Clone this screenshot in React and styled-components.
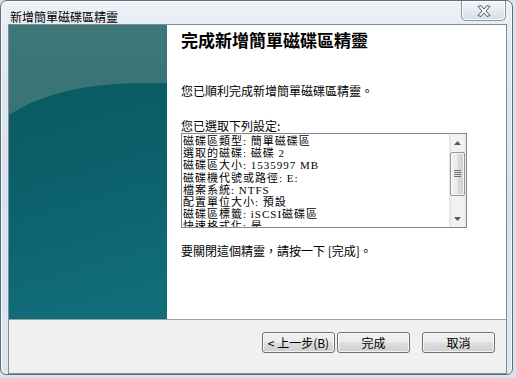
import React from "react";
import styled, { createGlobalStyle } from "styled-components";

const GlobalStyle = createGlobalStyle`
  html, body {
    margin: 0;
    padding: 0;
    background: #d9e2ea;
  }
  body {
    font-family: "Noto Sans CJK TC", "Noto Sans", sans-serif;
    font-size: 12px;
    color: #000;
  }
`;

const Frame = styled.div`
  box-sizing: border-box;
  width: 513px;
  height: 375px;
  padding: 0 5px 6px 7px;
  border: 1px solid #5f6e7c;
  border-radius: 7px 7px 6px 6px;
  background: linear-gradient(180deg, #eef2f6 0%, #e1e9f0 12%, #d6e2ec 55%, #dde7f0 100%);
  box-shadow: inset 0 0 0 1px rgba(255, 255, 255, 0.7);
  display: flex;
  flex-direction: column;
`;

const TitleBar = styled.div`
  height: 29px;
  display: flex;
  justify-content: space-between;
  align-items: flex-start;
  padding-left: 2px;
`;

const Title = styled.div`
  margin-top: 9px;
  font-size: 12px;
  line-height: 14px;
  color: #000;
`;

const CloseButton = styled.div`
  box-sizing: border-box;
  width: 45px;
  height: 20px;
  margin-right: 1px;
  border: 1px solid #8895a2;
  border-top: none;
  border-radius: 0 0 5px 5px;
  background: linear-gradient(180deg, #f2f5f8 0%, #e3eaf0 50%, #d4dee7 100%);
  box-shadow: inset 0 0 0 1px rgba(255, 255, 255, 0.8);
  display: flex;
  align-items: center;
  justify-content: center;
`;

const Client = styled.div`
  flex: 1;
  display: flex;
  flex-direction: column;
  border: 1px solid #7f8b96;
  background: #f0f0f0;
`;

const Main = styled.div`
  height: 294px;
  display: flex;
  background: #fff;
`;

const Watermark = styled.div`
  width: 158px;
  flex-shrink: 0;
  svg {
    display: block;
  }
`;

const Body = styled.div`
  flex: 1;
  padding: 5px 14px 0 14px;
`;

const Heading = styled.h1`
  margin: 0;
  font-size: 17px;
  line-height: 20px;
  font-weight: bold;
`;

const Text = styled.p`
  margin: ${(p) => p.top}px 0 0 0;
  font-size: 12px;
  line-height: 14px;
`;

const ListBox = styled.div`
  box-sizing: border-box;
  width: 286px;
  height: 95px;
  border: 1px solid #828790;
  background: #fff;
  display: flex;
`;

const ListLines = styled.div`
  flex: 1;
  overflow: hidden;
  padding: 1px 0 0 1px;
  font-family: "Liberation Serif", "Noto Sans CJK TC", serif;
  font-size: 11px;
  letter-spacing: 1px;
  line-height: 12.2px;
  white-space: nowrap;
`;

const Line = styled.div``;

const ScrollBar = styled.div`
  width: 17px;
  display: flex;
  flex-direction: column;
  align-items: center;
  background: linear-gradient(90deg, #e3e3e3 0%, #f2f2f2 20%, #f2f2f2 80%, #e6e6e6 100%);
`;

const Arrow = styled.div`
  height: 17px;
  display: flex;
  align-items: center;
  justify-content: center;
`;

const Thumb = styled.div`
  box-sizing: border-box;
  width: 15px;
  height: 44px;
  margin-top: 1px;
  border: 1px solid #979797;
  border-radius: 2px;
  background: linear-gradient(90deg, #f4f4f4 0%, #ececec 45%, #dadada 55%, #cfcfcf 100%);
  box-shadow: inset 0 0 0 1px rgba(255, 255, 255, 0.8);
  display: flex;
  align-items: center;
  justify-content: center;
`;

const Track = styled.div`
  flex: 1;
`;

const Footer = styled.div`
  height: 41px;
  border-top: 1px solid #a0a0a0;
  display: flex;
  justify-content: flex-end;
  align-items: flex-start;
  padding: 12px 11px 0 0;
`;

const Button = styled.button`
  box-sizing: border-box;
  width: 73px;
  height: 21px;
  margin-left: ${(p) => p.gap}px;
  padding: 0;
  border: 1px solid #707070;
  border-radius: 3px;
  background: linear-gradient(180deg, #f2f2f2 0%, #ebebeb 48%, #dddddd 52%, #cfcfcf 100%);
  box-shadow: inset 0 0 0 1px rgba(255, 255, 255, 0.75);
  font-family: "Noto Sans CJK TC", "Noto Sans", sans-serif;
  font-size: 12px;
  line-height: 17px;
  color: #000;
`;

const settings = [
  "磁碟區類型: 簡單磁碟區",
  "選取的磁碟: 磁碟 2",
  "磁碟區大小: 1535997 MB",
  "磁碟機代號或路徑: E:",
  "檔案系統: NTFS",
  "配置單位大小: 預設",
  "磁碟區標籤: iSCSI磁碟區",
  "快速格式化: 是",
];

const WatermarkArt = () => (
  <svg width="158" height="294" viewBox="0 0 158 294">
    <defs>
      <linearGradient id="top" x1="0" y1="0" x2="0" y2="1">
        <stop offset="0" stopColor="#3e7778" />
        <stop offset="1" stopColor="#2d6b6f" />
      </linearGradient>
      <linearGradient id="low" x1="0" y1="0" x2="0.2" y2="1">
        <stop offset="0" stopColor="#0a5961" />
        <stop offset="0.5" stopColor="#0c616c" />
        <stop offset="1" stopColor="#116c79" />
      </linearGradient>
    </defs>
    <rect width="158" height="294" fill="url(#top)" />
    <path d="M0 90 Q45 60 125 58 L158 58 L158 294 L0 294 Z" fill="url(#low)" />
  </svg>
);

export default function App() {
  return (
    <>
      <GlobalStyle />
      <Frame>
        <TitleBar>
          <Title>新增簡單磁碟區精靈</Title>
          <CloseButton>
            <svg width="14" height="12" viewBox="0 0 14 12">
              <path
                d="M1 1.5 L4 0.5 L7 4 L10 0.5 L13 1.5 L9 6 L13 10.5 L10 11.5 L7 8 L4 11.5 L1 10.5 L5 6 Z"
                fill="#f4f6f8"
                stroke="#535b63"
                strokeWidth="1"
                strokeLinejoin="round"
              />
            </svg>
          </CloseButton>
        </TitleBar>
        <Client>
          <Main>
            <Watermark>
              <WatermarkArt />
            </Watermark>
            <Body>
              <Heading>完成新增簡單磁碟區精靈</Heading>
              <Text top={34}>您已順利完成新增簡單磁碟區精靈。</Text>
              <Text top={21}>您已選取下列設定:</Text>
              <ListBox>
                <ListLines>
                  {settings.map((s) => (
                    <Line key={s}>{s}</Line>
                  ))}
                </ListLines>
                <ScrollBar>
                  <Arrow>
                    <svg width="7" height="4" viewBox="0 0 7 4">
                      <path d="M0 4 L3.5 0 L7 4 Z" fill="#5a5a5a" />
                    </svg>
                  </Arrow>
                  <Thumb>
                    <svg width="7" height="8" viewBox="0 0 7 8">
                      <path d="M0 0.5 H7 M0 2.5 H7 M0 4.5 H7 M0 6.5 H7" stroke="#707070" strokeWidth="1" />
                    </svg>
                  </Thumb>
                  <Track />
                  <Arrow>
                    <svg width="7" height="4" viewBox="0 0 7 4">
                      <path d="M0 0 L7 0 L3.5 4 Z" fill="#5a5a5a" />
                    </svg>
                  </Arrow>
                </ScrollBar>
              </ListBox>
              <Text top={16}>要關閉這個精靈，請按一下 [完成]。</Text>
            </Body>
          </Main>
          <Footer>
            <Button gap={0}>&lt; 上一步(B)</Button>
            <Button gap={2}>完成</Button>
            <Button gap={12}>取消</Button>
          </Footer>
        </Client>
      </Frame>
    </>
  );
}
